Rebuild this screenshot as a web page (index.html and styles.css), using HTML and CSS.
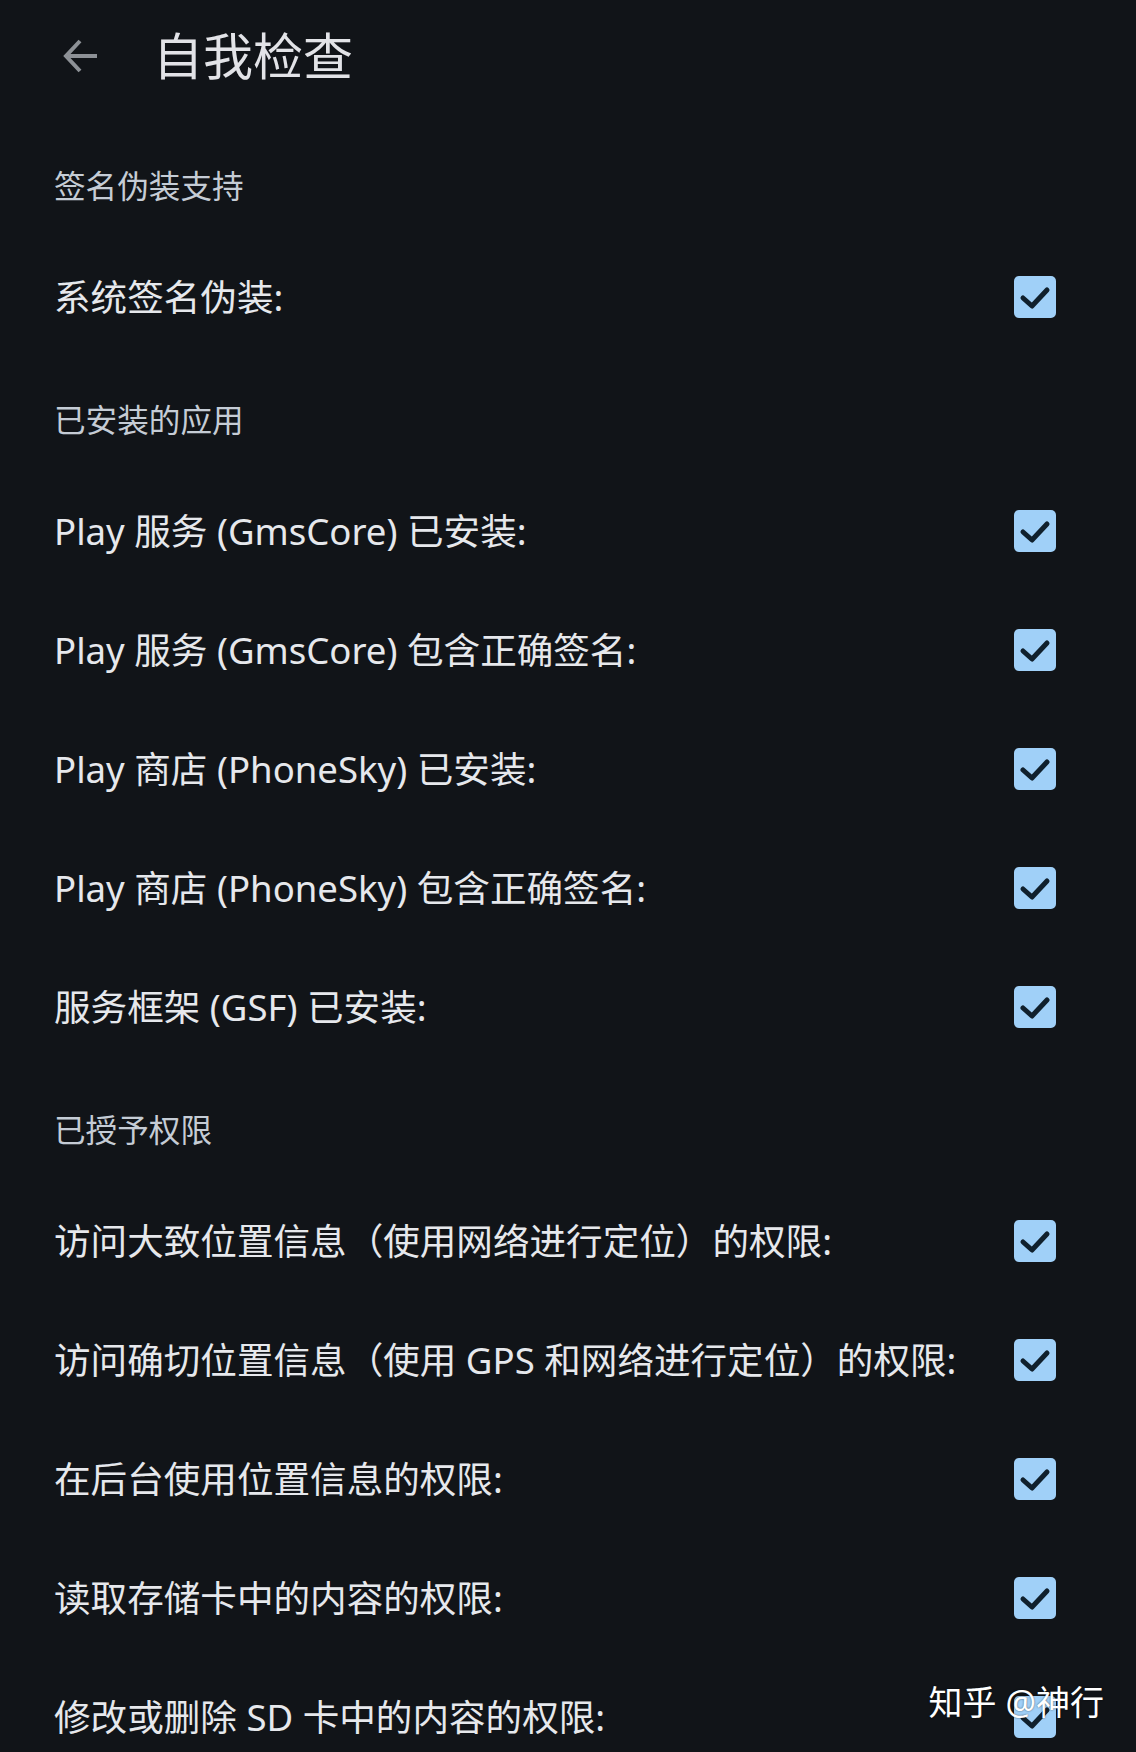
FILE: index.html
```html
<!DOCTYPE html>
<html lang="zh-CN">
<head>
<meta charset="utf-8">
<title>自我检查</title>
<link rel="stylesheet" href="styles.css">
</head>
<body>
<div class="screen">
  <header class="toolbar">
    <svg class="back" width="36" height="36" viewBox="0 0 36 36" aria-hidden="true">
      <path d="M34 18 H4 M17 3 L3 18 L17 33" fill="none" stroke="#8d9196" stroke-width="4" stroke-linecap="butt" stroke-linejoin="miter"/>
    </svg>
    <h1 class="title">自我检查</h1>
  </header>

  <section class="group">
    <div class="group-title">签名伪装支持</div>
    <div class="row"><span class="label">系统签名伪装:</span><span class="check"><svg viewBox="0 0 42 42"><path d="M9 22 L18 30 L33 14"/></svg></span></div>
  </section>

  <section class="group">
    <div class="group-title">已安装的应用</div>
    <div class="row"><span class="label">Play 服务 (GmsCore) 已安装:</span><span class="check"><svg viewBox="0 0 42 42"><path d="M9 22 L18 30 L33 14"/></svg></span></div>
    <div class="row"><span class="label">Play 服务 (GmsCore) 包含正确签名:</span><span class="check"><svg viewBox="0 0 42 42"><path d="M9 22 L18 30 L33 14"/></svg></span></div>
    <div class="row"><span class="label">Play 商店 (PhoneSky) 已安装:</span><span class="check"><svg viewBox="0 0 42 42"><path d="M9 22 L18 30 L33 14"/></svg></span></div>
    <div class="row"><span class="label">Play 商店 (PhoneSky) 包含正确签名:</span><span class="check"><svg viewBox="0 0 42 42"><path d="M9 22 L18 30 L33 14"/></svg></span></div>
    <div class="row"><span class="label">服务框架 (GSF) 已安装:</span><span class="check"><svg viewBox="0 0 42 42"><path d="M9 22 L18 30 L33 14"/></svg></span></div>
  </section>

  <section class="group">
    <div class="group-title">已授予权限</div>
    <div class="row"><span class="label">访问大致位置信息（使用网络进行定位）的权限:</span><span class="check"><svg viewBox="0 0 42 42"><path d="M9 22 L18 30 L33 14"/></svg></span></div>
    <div class="row"><span class="label">访问确切位置信息（使用 GPS 和网络进行定位）的权限:</span><span class="check"><svg viewBox="0 0 42 42"><path d="M9 22 L18 30 L33 14"/></svg></span></div>
    <div class="row"><span class="label">在后台使用位置信息的权限:</span><span class="check"><svg viewBox="0 0 42 42"><path d="M9 22 L18 30 L33 14"/></svg></span></div>
    <div class="row"><span class="label">读取存储卡中的内容的权限:</span><span class="check"><svg viewBox="0 0 42 42"><path d="M9 22 L18 30 L33 14"/></svg></span></div>
    <div class="row"><span class="label">修改或删除 SD 卡中的内容的权限:</span><span class="check"><svg viewBox="0 0 42 42"><path d="M9 22 L18 30 L33 14"/></svg></span></div>
  </section>

  <div class="watermark">知乎 @神行</div>
</div>
</body>
</html>
```

FILE: styles.css
```css
html, body {
  margin: 0;
  padding: 0;
  background: #111418;
}

body {
  font-family: "Noto Sans", "Noto Sans CJK SC", sans-serif;
  color: #e3e5e9;
}

.screen {
  position: relative;
  width: 1136px;
  height: 1752px;
  overflow: hidden;
  background: #111418;
}

.toolbar {
  height: 112px;
  padding-bottom: 10px;
  padding-left: 63px;
  display: flex;
  align-items: center;
}

.back {
  display: block;
  flex: none;
}

.title {
  margin: 0 0 0 54px;
  font-size: 50px;
  font-weight: 400;
  line-height: 56px;
  color: #e2e3e7;
}

.group-title {
  height: 36px;
  padding: 46px 0 33px 54px;
  font-size: 31.6px;
  line-height: 36px;
  color: #c5ccd5;
}

.row {
  height: 119px;
  padding: 0 80px 0 54px;
  display: flex;
  align-items: center;
  justify-content: space-between;
}

.label {
  font-size: 36.6px;
  line-height: 44px;
  color: #e6e8ec;
  white-space: nowrap;
}

.check {
  flex: none;
  width: 42px;
  height: 42px;
  border-radius: 5px;
  background: #a0d0f8;
  display: flex;
}

.check svg {
  width: 42px;
  height: 42px;
}

.check path {
  fill: none;
  stroke: #10202d;
  stroke-width: 5;
  stroke-linecap: round;
  stroke-linejoin: round;
}

.watermark {
  position: absolute;
  top: 1682px;
  right: 32px;
  font-size: 34px;
  line-height: 40px;
  color: #ffffff;
  text-shadow: 0 0 2px rgba(0, 0, 0, 0.6);
  white-space: nowrap;
}
```
